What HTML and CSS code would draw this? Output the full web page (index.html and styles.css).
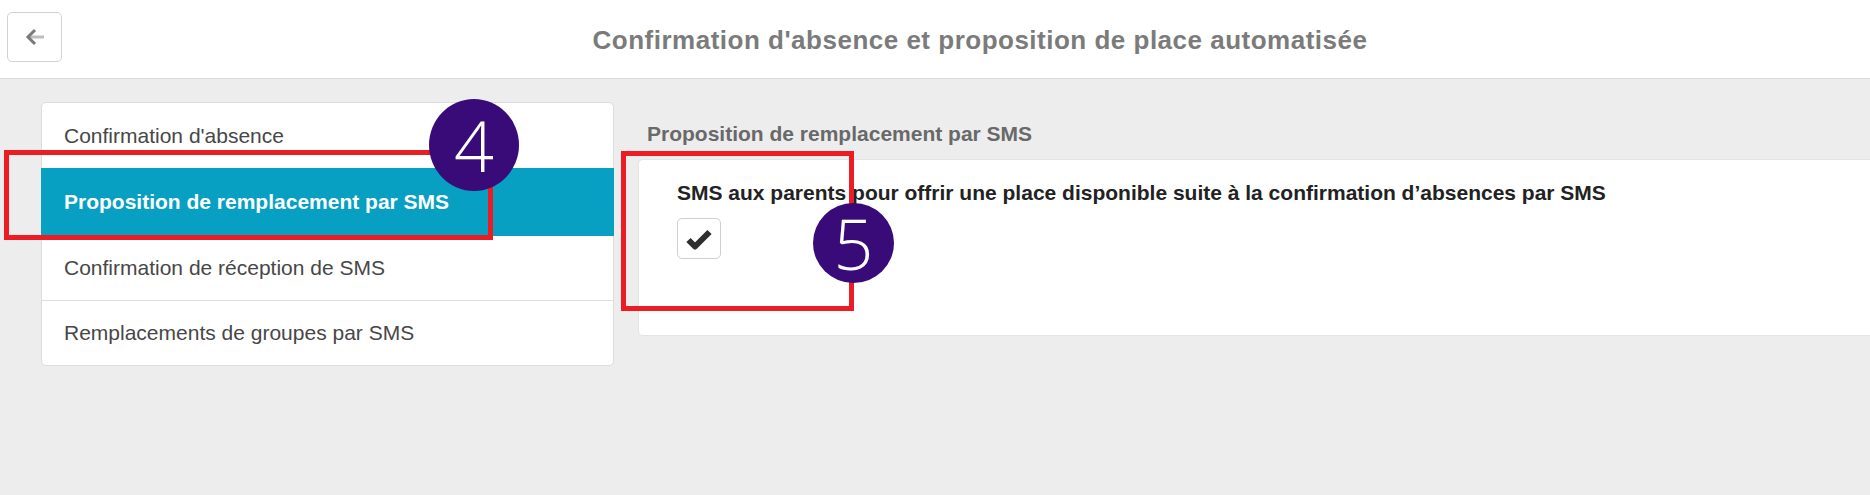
FILE: index.html
```html
<!DOCTYPE html>
<html lang="fr">
<head>
    <meta charset="UTF-8">
    <meta name="viewport" content="width=device-width, initial-scale=1.0">
    <title>Confirmation d'absence et proposition de place automatisée</title>
    <link rel="stylesheet" href="styles.css">
</head>
<body>
    <header class="topbar">
        <button class="back-btn" type="button" aria-label="Retour">
            <svg width="20" height="18" viewBox="0 0 20 18">
                <line x1="4" y1="9" x2="19" y2="9" stroke="#bdbdbd" stroke-width="3"/>
                <polyline points="10,2 3,9 10,16" fill="none" stroke="#7a7a7a" stroke-width="3" stroke-linejoin="miter"/>
            </svg>
        </button>
        <h1 class="page-title">Confirmation d'absence et proposition de place automatisée</h1>
    </header>

    <main class="content">
        <nav class="side-menu">
            <a class="menu-item" href="#">Confirmation d'absence</a>
            <a class="menu-item active" href="#">Proposition de remplacement par SMS</a>
            <a class="menu-item" href="#">Confirmation de réception de SMS</a>
            <a class="menu-item" href="#">Remplacements de groupes par SMS</a>
        </nav>

        <section class="settings">
            <h2 class="section-title">Proposition de remplacement par SMS</h2>
            <div class="setting-card">
                <div class="setting-label">SMS aux parents pour offrir une place disponible suite à la confirmation d’absences par SMS</div>
                <span class="check-box">
                    <svg width="26" height="22" viewBox="0 0 26 22">
                        <path d="M2.5 12 L9 18.5 L23.5 4" fill="none" stroke="#2f2f2f" stroke-width="6" stroke-linejoin="round"/>
                    </svg>
                </span>
            </div>
        </section>
    </main>

    <!-- annotation marks drawn over the screenshot -->
    <div class="mark-box mark-box-4"></div>
    <div class="mark-box mark-box-5"></div>
    <div class="step-badge step-4">4</div>
    <div class="step-badge step-5">5</div>
</body>
</html>
```

FILE: styles.css
```css
body {
    font-family: "Liberation Sans", Arial, sans-serif;
    background-color: #ededed;
    margin: 0;
    padding: 0;
    overflow: hidden;
}

.topbar {
    display: flex;
    align-items: flex-start;
    background-color: #fff;
    border-bottom: 1px solid #dcdcdc;
    padding: 12px 0 0 7px;
    height: 66px;
}
.back-btn {
    width: 55px;
    height: 50px;
    background: #fff;
    border: 1px solid #d2d2d2;
    border-radius: 5px;
    display: flex;
    align-items: center;
    justify-content: center;
    padding: 0;
    cursor: pointer;
}
.page-title {
    flex: 1;
    margin: 0 0 0 28px;
    padding-top: 13px;
    text-align: center;
    font-size: 26px;
    letter-spacing: 0.5px;
    line-height: 30px;
    font-weight: bold;
    color: #7b7b7b;
}

.content {
    display: flex;
    gap: 24px;
    padding: 23px 0 0 41px;
}

.side-menu {
    width: 573px;
    flex-shrink: 0;
    background: #fff;
    border: 1px solid #dcdcdc;
    border-radius: 5px;
    box-sizing: border-box;
    display: flex;
    flex-direction: column;
}
.menu-item {
    display: flex;
    align-items: center;
    height: 64px;
    padding-left: 22px;
    border-top: 1px solid #dedede;
    font-size: 21px;
    color: #474747;
    text-decoration: none;
}
.menu-item:first-child {
    border-top: none;
    height: 65px;
}
.menu-item.active {
    background-color: #079fc2;
    color: #fff;
    font-weight: bold;
    height: 68px;
    margin: 0 -1px;
    padding-left: 23px;
    border-top: none;
}
.menu-item.active + .menu-item {
    border-top: none;
}

.settings {
    flex: 1;
}
.section-title {
    margin: 20px 0 13px;
    padding-left: 9px;
    font-size: 21px;
    line-height: 24px;
    font-weight: bold;
    color: #696969;
}
.setting-card {
    height: 177px;
    box-sizing: border-box;
    background: #fff;
    border: 1px solid #e4e4e4;
    border-right: none;
    border-radius: 5px 0 0 5px;
    padding: 21px 0 0 38px;
}
.setting-label {
    font-size: 21px;
    line-height: 24px;
    font-weight: bold;
    color: #222;
}
.check-box {
    margin-top: 13px;
    width: 44px;
    height: 41px;
    box-sizing: border-box;
    border: 1px solid #cfcfcf;
    border-radius: 5px;
    display: flex;
    align-items: center;
    justify-content: center;
}

/* annotations */
.mark-box {
    position: absolute;
    border: 5px solid #ec1c24;
    box-sizing: border-box;
}
.mark-box-4 {
    left: 4px;
    top: 150px;
    width: 489px;
    height: 90px;
}
.mark-box-5 {
    left: 621px;
    top: 151px;
    width: 233px;
    height: 160px;
}
.step-badge {
    position: absolute;
    border-radius: 50%;
    background-color: #380b78;
    color: #fff;
    font-family: "Open Sans", "Noto Sans", sans-serif;
    font-weight: 300;
    font-size: 70px;
    display: flex;
    align-items: center;
    justify-content: center;
    line-height: 1;
}
.step-4 {
    left: 429px;
    top: 99px;
    width: 90px;
    height: 92px;
}
.step-5 {
    left: 813px;
    top: 203px;
    width: 81px;
    height: 80px;
}
```
